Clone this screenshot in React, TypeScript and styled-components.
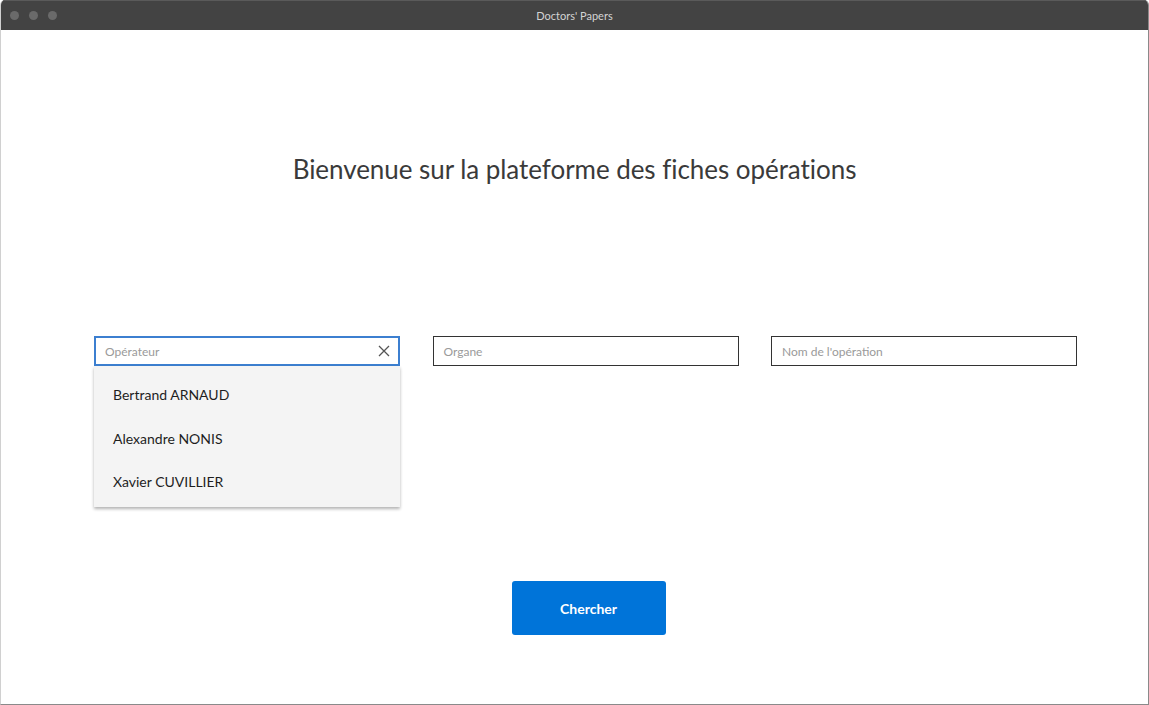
import React from 'react';
import styled, { createGlobalStyle } from 'styled-components';

const GlobalStyle = createGlobalStyle`
  html, body {
    margin: 0;
    padding: 0;
    background: #ffffff;
  }
  body {
    font-family: Lato, "Noto Sans", sans-serif;
  }
`;

const Window = styled.div`
  width: 1149px;
  height: 705px;
  box-sizing: border-box;
  display: flex;
  flex-direction: column;
  background: #fff;
  border-right: 1px solid #8a8a8a;
  border-bottom: 1px solid #8a8a8a;
  border-left: 1px solid #d0d0d0;
  border-radius: 5px 5px 0 0;
  overflow: hidden;
`;

const TitleBar = styled.div`
  height: 30px;
  flex-shrink: 0;
  background: #434343;
  border-top: 1px solid #5a5a5a;
  box-sizing: border-box;
  display: flex;
  align-items: center;
  position: relative;
  padding-left: 9px;
`;

const Dots = styled.div`
  display: flex;
  gap: 10px;
`;

const Dot = styled.span`
  width: 9px;
  height: 9px;
  border-radius: 50%;
  background: #6a6a6a;
`;

const Title = styled.div`
  position: absolute;
  left: 0;
  right: 0;
  text-align: center;
  color: #d4d4d4;
  font-size: 11px;
  font-family: Lato, sans-serif;
`;

const Content = styled.main`
  flex: 1;
  display: flex;
  flex-direction: column;
  align-items: center;
`;

const Heading = styled.h1`
  margin: 123px 0 0;
  font-weight: 400;
  font-size: 26px;
  color: #3a3a3a;
  letter-spacing: -0.05px;
`;

const Fields = styled.div`
  margin-top: 151px;
  display: flex;
  gap: 32.5px;
  align-self: stretch;
  padding-left: 93px;
  height: 245px;
`;

const FieldWrap = styled.div`
  position: relative;
  width: 306px;
`;

const Input = styled.div<{ $focused?: boolean }>`
  height: 30px;
  box-sizing: border-box;
  border: ${(p) => (p.$focused ? '2px solid #3c7fd0' : '1px solid #333')};
  padding-left: ${(p) => (p.$focused ? '9px' : '10px')};
  padding-right: 8px;
  display: flex;
  align-items: center;
  justify-content: space-between;
  font-size: 12px;
  color: #9a9a9a;
  background: #fff;
`;

const ClearIcon = styled.svg`
  width: 12px;
  height: 12px;
  color: #555;
`;

const Menu = styled.ul`
  position: absolute;
  top: 30px;
  left: 0;
  right: 0;
  margin: 0;
  padding: 7px 0 3px;
  list-style: none;
  background: #f4f4f4;
  box-shadow: 0 2px 3px rgba(0, 0, 0, 0.3);
`;

const MenuItem = styled.li`
  height: 43.5px;
  display: flex;
  align-items: center;
  padding-left: 19px;
  font-size: 14px;
  color: #1e1e1e;
`;

const SearchButton = styled.button`
  width: 154px;
  height: 54px;
  margin-left: 28px;
  border: none;
  border-radius: 3px;
  background: #0074d9;
  color: #fff;
  font-family: inherit;
  font-weight: 700;
  font-size: 14px;
  cursor: pointer;
`;

const operateurs = ['Bertrand ARNAUD', 'Alexandre NONIS', 'Xavier CUVILLIER'];

const App = () => {
  return (
    <>
      <GlobalStyle />
      <Window>
        <TitleBar>
          <Dots>
            <Dot />
            <Dot />
            <Dot />
          </Dots>
          <Title>Doctors' Papers</Title>
        </TitleBar>
        <Content>
          <Heading>Bienvenue sur la plateforme des fiches opérations</Heading>
          <Fields>
            <FieldWrap>
              <Input $focused>
                <span>Opérateur</span>
                <ClearIcon viewBox="0 0 12 12">
                  <path d="M1 1 L11 11 M11 1 L1 11" stroke="currentColor" strokeWidth="1.3" fill="none" />
                </ClearIcon>
              </Input>
              <Menu>
                {operateurs.map((name, index) => (
                  <MenuItem key={index}>{name}</MenuItem>
                ))}
              </Menu>
            </FieldWrap>
            <FieldWrap>
              <Input>Organe</Input>
            </FieldWrap>
            <FieldWrap>
              <Input>Nom de l'opération</Input>
            </FieldWrap>
          </Fields>
          <SearchButton>Chercher</SearchButton>
        </Content>
      </Window>
    </>
  );
};

export default App;
